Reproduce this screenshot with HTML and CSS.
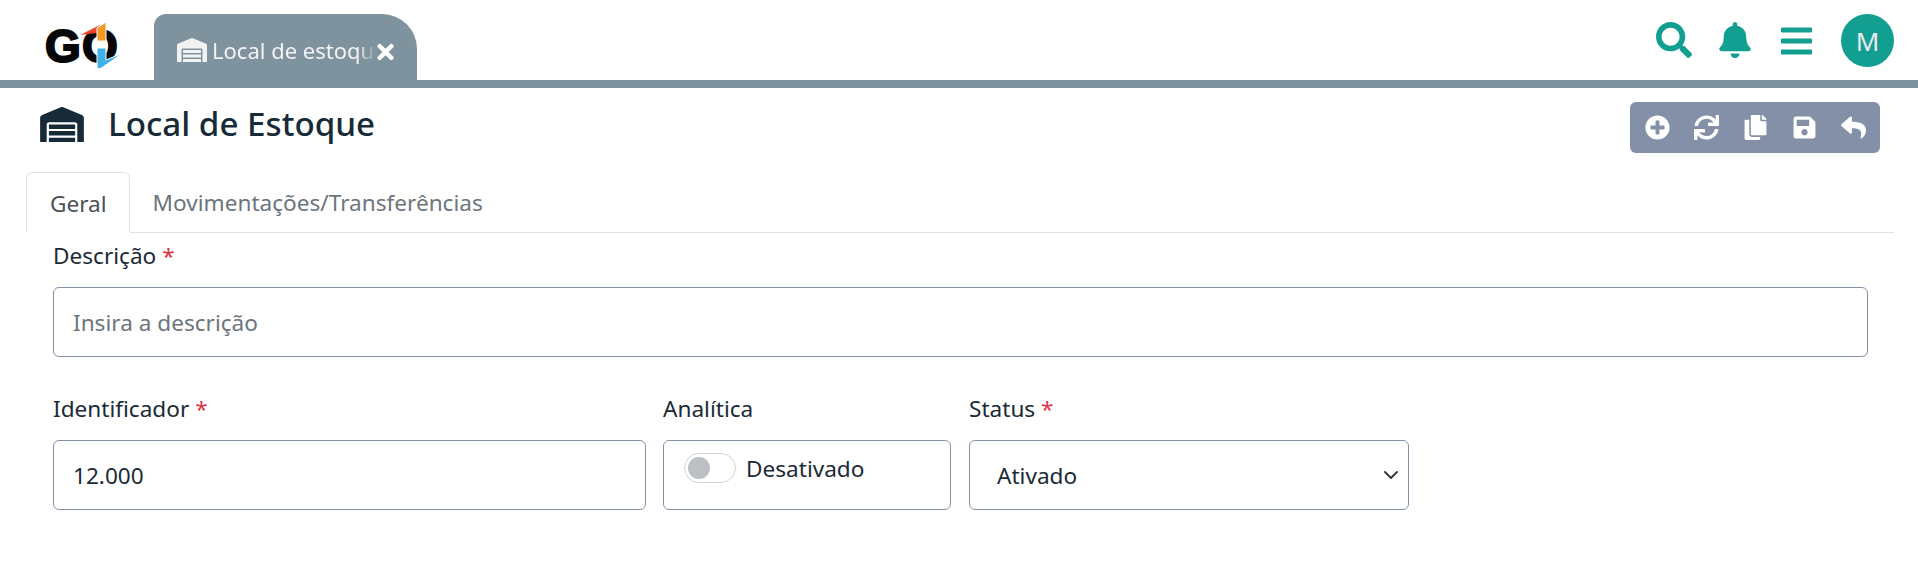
FILE: index.html
```html
<!DOCTYPE html>
<html lang="pt-BR">
<head>
    <meta charset="UTF-8">
    <meta name="viewport" content="width=device-width, initial-scale=1.0">
    <title>Local de Estoque</title>
    <link rel="stylesheet" href="styles.css">
</head>
<body>

    <svg class="sprites" width="0" height="0">
        <symbol id="i-warehouse" viewBox="0 0 640 512"><path d="M504 352H136.4c-4.4 0-8 3.6-8 8l-.1 48c0 4.4 3.6 8 8 8H504c4.4 0 8-3.6 8-8v-48c0-4.4-3.6-8-8-8zm0 96H136.1c-4.4 0-8 3.6-8 8l-.1 48c0 4.4 3.6 8 8 8h368c4.4 0 8-3.6 8-8v-48c0-4.4-3.6-8-8-8zm0-192H136.6c-4.4 0-8 3.6-8 8l-.1 48c0 4.4 3.6 8 8 8H504c4.4 0 8-3.6 8-8v-48c0-4.4-3.6-8-8-8zm106.5-139L338.4 3.7a48.15 48.15 0 0 0-36.9 0L29.5 117C11.7 124.5 0 141.9 0 161.3V504c0 4.4 3.6 8 8 8h80c4.4 0 8-3.6 8-8V256c0-17.6 14.6-32 32.6-32h382.8c18 0 32.6 14.4 32.6 32v248c0 4.4 3.6 8 8 8h80c4.4 0 8-3.6 8-8V161.3c0-19.4-11.7-36.8-29.5-44.3z"/></symbol>
        <symbol id="i-times" viewBox="0 0 352 512"><path d="M242.72 256l100.07-100.07c12.28-12.28 12.28-32.19 0-44.48l-22.24-22.24c-12.28-12.28-32.19-12.28-44.48 0L176 189.28 75.93 89.21c-12.28-12.28-32.19-12.28-44.48 0L9.21 111.45c-12.28 12.28-12.28 32.19 0 44.48L109.28 256 9.21 356.07c-12.28 12.28-12.28 32.19 0 44.48l22.24 22.24c12.28 12.28 32.2 12.28 44.48 0L176 322.72l100.07 100.07c12.28 12.28 32.2 12.28 44.48 0l22.24-22.24c12.28-12.28 12.28-32.19 0-44.48L242.72 256z"/></symbol>
        <symbol id="i-search" viewBox="0 0 512 512"><path d="M505 442.7L405.3 343c-4.5-4.5-10.6-7-17-7H372c27.6-35.3 44-79.7 44-128C416 93.1 322.9 0 208 0S0 93.1 0 208s93.1 208 208 208c48.3 0 92.7-16.4 128-44v16.3c0 6.4 2.5 12.5 7 17l99.7 99.7c9.4 9.4 24.6 9.4 33.9 0l28.3-28.3c9.4-9.4 9.4-24.6.1-34zM208 336c-70.7 0-128-57.2-128-128 0-70.7 57.2-128 128-128 70.7 0 128 57.2 128 128 0 70.7-57.2 128-128 128z"/></symbol>
        <symbol id="i-bell" viewBox="0 0 448 512"><path d="M224 512c35.32 0 63.97-28.65 63.97-64H160.03c0 35.35 28.65 64 63.97 64zm215.39-149.71c-19.32-20.76-55.47-51.99-55.47-154.29 0-77.7-54.48-139.9-127.94-155.16V32c0-17.67-14.32-32-31.98-32s-31.98 14.33-31.98 32v20.84C118.56 68.1 64.08 130.3 64.08 208c0 102.3-36.15 133.53-55.47 154.29-6 6.45-8.66 14.16-8.61 21.71.11 16.4 12.98 32 32.1 32h383.8c19.12 0 32-15.6 32.1-32 .05-7.55-2.61-15.27-8.61-21.71z"/></symbol>
        <symbol id="i-bars" viewBox="0 0 448 512"><path d="M16 132h416c8.837 0 16-7.163 16-16V76c0-8.837-7.163-16-16-16H16C7.163 60 0 67.163 0 76v40c0 8.837 7.163 16 16 16zm0 160h416c8.837 0 16-7.163 16-16v-40c0-8.837-7.163-16-16-16H16c-8.837 0-16 7.163-16 16v40c0 8.837 7.163 16 16 16zm0 160h416c8.837 0 16-7.163 16-16v-40c0-8.837-7.163-16-16-16H16c-8.837 0-16 7.163-16 16v40c0 8.837 7.163 16 16 16z"/></symbol>
        <symbol id="i-plus" viewBox="0 0 512 512"><path d="M256 8C119 8 8 119 8 256s111 248 248 248 248-111 248-248S393 8 256 8zm144 276c0 6.6-5.4 12-12 12h-92v92c0 6.6-5.4 12-12 12h-56c-6.6 0-12-5.4-12-12v-92h-92c-6.6 0-12-5.4-12-12v-56c0-6.6 5.4-12 12-12h92v-92c0-6.6 5.4-12 12-12h56c6.6 0 12 5.4 12 12v92h92c6.6 0 12 5.4 12 12v56z"/></symbol>
        <symbol id="i-sync" viewBox="0 0 512 512"><path d="M440.65 12.57l4 82.77A247.16 247.16 0 0 0 255.83 8C134.73 8 33.91 94.92 12.29 209.82A12 12 0 0 0 24.09 224h49.05a12 12 0 0 0 11.67-9.26 175.91 175.91 0 0 1 317-56.94l-101.46-4.86a12 12 0 0 0-12.57 12v47.41a12 12 0 0 0 12 12H500a12 12 0 0 0 12-12V12a12 12 0 0 0-12-12h-47.37a12 12 0 0 0-11.98 12.57zM255.83 432a175.61 175.61 0 0 1-146-77.8l101.8 4.87a12 12 0 0 0 12.57-12v-47.4a12 12 0 0 0-12-12H12a12 12 0 0 0-12 12V500a12 12 0 0 0 12 12h47.35a12 12 0 0 0 12-12.6l-4.15-82.57A247.17 247.17 0 0 0 255.83 504c121.11 0 221.93-86.92 243.55-201.82a12 12 0 0 0-11.8-14.18h-49.05a12 12 0 0 0-11.67 9.26A175.86 175.86 0 0 1 255.83 432z"/></symbol>
        <symbol id="i-copy" viewBox="0 0 448 512"><path d="M320 448v40c0 13.255-10.745 24-24 24H24c-13.255 0-24-10.745-24-24V120c0-13.255 10.745-24 24-24h72v296c0 30.879 25.121 56 56 56h168zm0-344V0H152c-13.255 0-24 10.745-24 24v368c0 13.255 10.745 24 24 24h272c13.255 0 24-10.745 24-24V128H344c-13.2 0-24-10.8-24-24zm120.971-31.029L375.029 7.029A24 24 0 0 0 358.059 0H352v96h96v-6.059a24 24 0 0 0-7.029-16.97z"/></symbol>
        <symbol id="i-save" viewBox="0 0 448 512"><path d="M433.941 129.941l-83.882-83.882A48 48 0 0 0 316.118 32H48C21.49 32 0 53.49 0 80v352c0 26.51 21.49 48 48 48h352c26.51 0 48-21.49 48-48V163.882a48 48 0 0 0-14.059-33.941zM224 416c-35.346 0-64-28.654-64-64 0-35.346 28.654-64 64-64s64 28.654 64 64c0 35.346-28.654 64-64 64zm96-304.52V212c0 6.627-5.373 12-12 12H76c-6.627 0-12-5.373-12-12V108c0-6.627 5.373-12 12-12h228.52c3.183 0 6.235 1.264 8.485 3.515l3.48 3.48A11.996 11.996 0 0 1 320 111.48z"/></symbol>
        <symbol id="i-reply" viewBox="0 0 512 512"><path d="M8.309 189.836L184.313 37.851C199.719 24.546 224 35.347 224 56.015v80.053c160.629 1.839 288 34.032 288 186.258 0 61.441-39.581 122.309-83.333 154.132-13.653 9.931-33.111-2.533-28.077-18.631 45.344-145.012-21.507-183.51-176.59-185.742V360c0 20.7-24.3 31.453-39.687 18.164l-176.004-152c-11.071-9.562-11.086-26.753 0-36.328z"/></symbol>
    </svg>

    <header class="topbar">
        <a class="logo" href="#">
            <svg viewBox="0 0 84 60" width="84" height="60">
                <text class="logo-text" x="1" y="43">G</text>
                <text class="logo-text" x="38" y="43">O</text>
                <path fill="#e8452c" d="M36 16 L56 6 L53 14 Z"/>
                <path fill="#f59a23" stroke="#fff" stroke-width="1" d="M53 9 L62 3 L62 22 L53 22 Z"/>
                <path fill="#3fb0e8" stroke="#fff" stroke-width="1" d="M53 29 L62 29 L62 41 L79 34 L56 50 L53 49 Z"/>
            </svg>
        </a>
        <div class="page-tab">
            <svg class="tab-icon"><use href="#i-warehouse"/></svg>
            <span class="tab-title">Local de estoque</span>
            <svg class="tab-close"><use href="#i-times"/></svg>
        </div>
        <div class="top-actions">
            <svg class="top-icon search"><use href="#i-search"/></svg>
            <svg class="top-icon bell"><use href="#i-bell"/></svg>
            <svg class="top-icon bars"><use href="#i-bars"/></svg>
            <div class="avatar">M</div>
        </div>
    </header>

    <main>
        <div class="title-row">
            <svg class="title-icon"><use href="#i-warehouse"/></svg>
            <h1>Local de Estoque</h1>
            <div class="toolbar">
                <svg><use href="#i-plus"/></svg>
                <svg><use href="#i-sync"/></svg>
                <svg><use href="#i-copy"/></svg>
                <svg><use href="#i-save"/></svg>
                <svg><use href="#i-reply"/></svg>
            </div>
        </div>

        <ul class="tabs">
            <li class="active">Geral</li>
            <li>Movimentações/Transferências</li>
        </ul>

        <form class="form">
            <div class="field">
                <label for="descricao">Descrição <span class="req">*</span></label>
                <input type="text" id="descricao" placeholder="Insira a descrição">
            </div>
            <div class="form-row">
                <div class="field col-id">
                    <label for="identificador">Identificador <span class="req">*</span></label>
                    <input type="text" id="identificador" value="12.000">
                </div>
                <div class="field col-switch">
                    <label>Analítica</label>
                    <div class="switch-box">
                        <span class="switch"><span class="knob"></span></span>
                        <span>Desativado</span>
                    </div>
                </div>
                <div class="field col-status">
                    <label for="status">Status <span class="req">*</span></label>
                    <div class="select-box">
                        <span>Ativado</span>
                        <svg viewBox="0 0 16 16" width="16" height="16"><path d="M2 5l6 6 6-6" fill="none" stroke="#343a40" stroke-width="2" stroke-linecap="round" stroke-linejoin="round"/></svg>
                    </div>
                </div>
            </div>
        </form>
    </main>

</body>
</html>
```

FILE: styles.css
```css
* {
    box-sizing: border-box;
}
body {
    margin: 0;
    font-family: "Noto Sans", Arial, sans-serif;
    font-size: 22.6px;
    color: #1b2a36;
    background: #fff;
    overflow: hidden;
}
.sprites {
    position: absolute;
}
svg {
    fill: currentColor;
    display: block;
}

/* top bar */
.topbar {
    display: flex;
    align-items: flex-end;
    height: 88px;
    border-bottom: 8px solid #7f939e;
    padding-left: 44px;
}
.logo {
    align-self: flex-start;
    margin-top: 19px;
    width: 110px;
    height: 60px;
}
.logo-text {
    font-family: "Liberation Sans", Arial, sans-serif;
    font-weight: 700;
    font-size: 46px;
    fill: #050708;
    stroke: #050708;
    stroke-width: 2px;
}
.page-tab {
    display: flex;
    align-items: center;
    width: 263px;
    height: 66px;
    background: #7f939e;
    border-radius: 12px 35px 0 0;
    padding: 6px 0 0 23px;
    color: #f2f2f2;
}
.tab-icon {
    width: 30px;
    height: 24px;
    flex: none;
}
.tab-title {
    width: 165px;
    margin-left: 5px;
    overflow: hidden;
    white-space: nowrap;
    font-size: 22px;
    -webkit-mask-image: linear-gradient(to right, #000 88%, transparent 100%);
    mask-image: linear-gradient(to right, #000 88%, transparent 100%);
}
.tab-close {
    width: 17px;
    height: 24px;
    color: #fff;
    flex: none;
    margin-top: 3px;
}
.top-actions {
    display: flex;
    align-items: center;
    align-self: flex-start;
    margin-left: auto;
    margin-top: 14px;
    padding-right: 24px;
    color: #129e91;
}
.top-icon {
    width: 36px;
    height: 36px;
}
.top-icon.search {
    margin-top: -2px;
}
.top-icon.bell {
    width: 32px;
    margin-left: 27px;
    margin-top: -2px;
}
.top-icon.bars {
    width: 31px;
    margin-left: 30px;
}
.avatar {
    width: 53px;
    height: 53px;
    margin-left: 29px;
    border-radius: 50%;
    background: #129e91;
    color: #e9ecef;
    font-size: 26px;
    display: flex;
    align-items: center;
    justify-content: center;
}

/* page title */
main {
    padding: 0 24px 0 26px;
}
.title-row {
    display: flex;
    align-items: flex-start;
    height: 84px;
    padding-left: 14px;
    padding-right: 14px;
}
.title-icon {
    width: 44px;
    height: 35px;
    margin-top: 19px;
    color: #172a38;
    flex: none;
}
h1 {
    margin: 14px 0 0 24px;
    font-size: 33.2px;
    font-weight: 500;
    line-height: 44px;
    color: #172a38;
}
.toolbar {
    display: flex;
    align-items: center;
    gap: 24px;
    margin-left: auto;
    margin-top: 14px;
    width: 250px;
    height: 51px;
    padding-left: 15px;
    background: #8490a8;
    border-radius: 6px;
    color: #fff;
}
.toolbar svg {
    width: 25px;
    height: 25px;
}

/* tabs */
.tabs {
    display: flex;
    list-style: none;
    margin: 0;
    padding: 0;
    height: 61px;
    border-bottom: 1px solid #dee2e6;
    color: #6c757d;
}
.tabs li {
    padding: 0 24px 0 23px;
    line-height: 62px;
    height: 61px;
}
.tabs li.active {
    padding: 0 22px 0 23px;
    color: #495057;
    background: #fff;
    border: 1px solid #dee2e6;
    border-bottom-color: #fff;
    border-radius: 6px 6px 0 0;
}

/* form */
.form {
    padding: 0 26px 0 27px;
}
.field label {
    display: block;
    line-height: 46px;
    height: 46px;
    margin-bottom: 8px;
}
.req {
    color: #dc3545;
}
.field input, .switch-box, .select-box {
    display: block;
    width: 100%;
    height: 70px;
    border: 1px solid #8490a8;
    border-radius: 6px;
    background: #fff;
    font: inherit;
    color: inherit;
    padding: 0 19px;
}
.field input::placeholder {
    color: #6c757d;
}
.form-row {
    display: flex;
    gap: 17px;
    margin-top: 29px;
}
.col-id {
    width: 593px;
}
.col-switch {
    width: 288px;
}
.col-status {
    width: 440px;
    margin-left: 1px;
}
.switch-box {
    display: flex;
    align-items: flex-start;
    gap: 10px;
    padding: 12px 20px;
    line-height: 32px;
}
.switch {
    width: 52px;
    height: 30px;
    border: 1px solid #ced4da;
    border-radius: 15px;
    padding: 3px;
    flex: none;
}
.knob {
    display: block;
    width: 22px;
    height: 22px;
    border-radius: 50%;
    background: #bcc0c4;
}
.select-box {
    display: flex;
    align-items: center;
    justify-content: space-between;
    padding: 0 9px 0 27px;
}
```
